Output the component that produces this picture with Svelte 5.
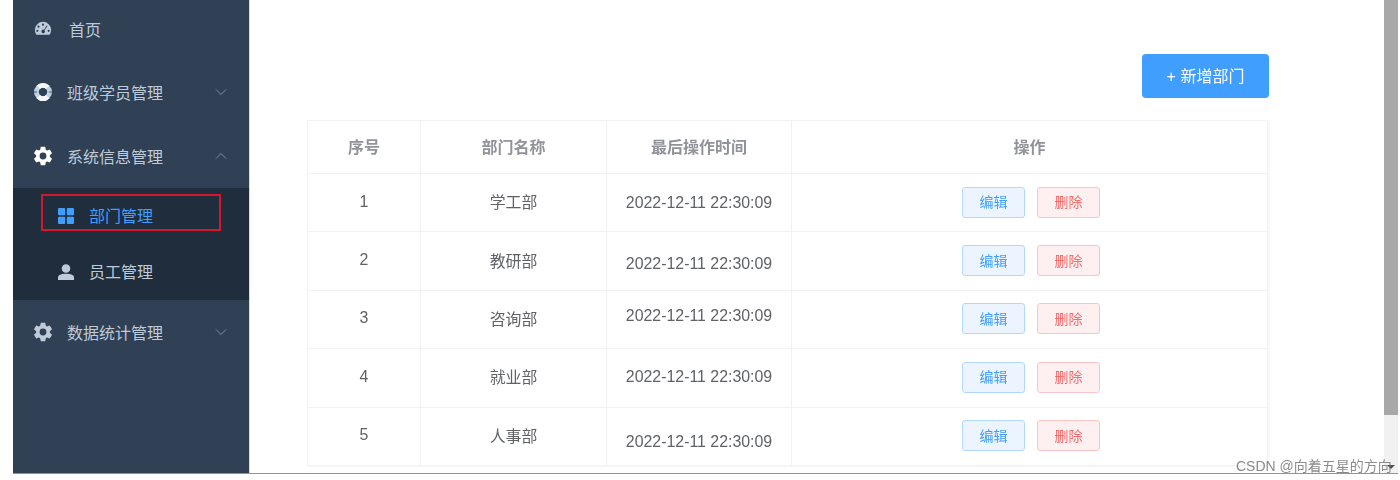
<script lang="ts">
  const depts = [
    { id: 1, name: '学工部', shift: 1 },
    { id: 2, name: '教研部', shift: 4 },
    { id: 3, name: '咨询部', shift: -2 },
    { id: 4, name: '就业部', shift: 0 },
    { id: 5, name: '人事部', shift: 7 }
  ];
  const time = '2022-12-11 22:30:09';

  // six toothed gear outline with a round hole, centred on 10,10
  function gearPath() {
    let d = '';
    for (let i = 0; i < 6; i++) {
      const a = (i * Math.PI) / 3 - Math.PI / 2;
      const pts = [
        [6.9, a - 0.42],
        [9.4, a - 0.24],
        [9.4, a + 0.24],
        [6.9, a + 0.42]
      ];
      for (const [r, t] of pts) {
        const x = (10 + r * Math.cos(t)).toFixed(2);
        const y = (10 + r * Math.sin(t)).toFixed(2);
        d += (d ? 'L' : 'M') + x + ' ' + y;
      }
    }
    return d + 'zM10 6.600a3.400 3.400 0 1 0 0 6.800 3.400 3.400 0 0 0 0-6.800z';
  }
  const gear = gearPath();
</script>

<div class="page">
  <aside class="sidebar">
    <div class="menu-item">
      <svg class="icon home-icon" viewBox="0 0 20 20">
        <path fill="#bfcbd9" fill-rule="evenodd" d="M10 2a9 9 0 0 0-9 9c0 2 .7 3.900 1.800 5.400h14.400A9 9 0 0 0 19 11a9 9 0 0 0-9-9zM10 4a1.200 1.200 0 1 1 0 2.400A1.200 1.200 0 0 1 10 4zM5 6.200a1.200 1.200 0 1 1 0 2.400 1.200 1.200 0 0 1 0-2.400zM3.700 10.800a1.200 1.200 0 1 1 0 2.400 1.200 1.200 0 0 1 0-2.400zM16.300 10.800a1.200 1.200 0 1 1 0 2.400 1.200 1.200 0 0 1 0-2.400zM14 6l1 .8-3.300 4.600a2 2 0 1 1-3.400.800 2 2 0 0 1 2.900-1.300z" />
      </svg>
      <span class="label">首页</span>
    </div>
    <div class="menu-item">
      <svg class="icon" viewBox="0 0 20 20">
        <circle cx="10" cy="10" r="6.600" fill="none" stroke="#c3d2e2" stroke-width="4.800" />
        <path fill="none" stroke="#f4f7fa" stroke-width="4.800" d="M5.300 5.300a6.600 6.600 0 0 1 9.400 0M14.700 14.700a6.600 6.600 0 0 1-9.400 0" />
        <path fill="none" stroke="#304156" stroke-width="0.800" d="M.5 10h3.600M15.900 10h3.600" />
      </svg>
      <span class="label">班级学员管理</span>
      <svg class="chevron" viewBox="0 0 12 8"><path d="M1 1.500l5 5 5-5" /></svg>
    </div>
    <div class="menu-item">
      <svg class="icon" viewBox="0 0 20 20"><path fill="#fff" fill-rule="evenodd" d={gear} /></svg>
      <span class="label">系统信息管理</span>
      <svg class="chevron" viewBox="0 0 12 8"><path d="M1 6.500l5-5 5 5" /></svg>
    </div>
    <div class="submenu">
      <div class="sub-item active">
        <span class="marker"></span>
        <svg class="sub-icon" viewBox="0 0 16 16">
          <rect x="0" y="0" width="7.200" height="7.200" rx="1" fill="#409eff" />
          <rect x="8.800" y="0" width="7.200" height="7.200" rx="1" fill="#409eff" />
          <rect x="0" y="8.800" width="7.200" height="7.200" rx="1" fill="#409eff" />
          <rect x="8.800" y="8.800" width="7.200" height="7.200" rx="1" fill="#409eff" />
        </svg>
        <span>部门管理</span>
      </div>
      <div class="sub-item">
        <svg class="sub-icon" viewBox="0 0 16 16">
          <circle cx="8" cy="4.500" r="4.300" fill="#bfcbd9" />
          <path fill="#bfcbd9" d="M0 16v-2.500C0 11 3 9.800 8 9.800s8 1.200 8 3.700V16z" />
        </svg>
        <span>员工管理</span>
      </div>
    </div>
    <div class="menu-item">
      <svg class="icon" viewBox="0 0 20 20"><path fill="#bfcbd9" fill-rule="evenodd" d={gear} /></svg>
      <span class="label">数据统计管理</span>
      <svg class="chevron" viewBox="0 0 12 8"><path d="M1 1.500l5 5 5-5" /></svg>
    </div>
  </aside>

  <main class="content">
    <div class="toolbar">
      <button class="add-btn">+ 新增部门</button>
    </div>
    <table class="dept-table">
      <colgroup>
        <col style="width: 113px" />
        <col style="width: 186px" />
        <col style="width: 185px" />
        <col />
      </colgroup>
      <thead>
        <tr>
          <th>序号</th>
          <th>部门名称</th>
          <th>最后操作时间</th>
          <th>操作</th>
        </tr>
      </thead>
      <tbody>
        {#each depts as d}
          <tr>
            <td>{d.id}</td>
            <td>{d.name}</td>
            <td><span class="time" style="transform: translateY({d.shift}px)">{time}</span></td>
            <td>
              <div class="actions">
                <button class="btn edit">编辑</button>
                <button class="btn del">删除</button>
              </div>
            </td>
          </tr>
        {/each}
      </tbody>
    </table>
  </main>

  <div class="scrollbar">
    <div class="thumb"></div>
    <div class="arrow"></div>
  </div>

  <span class="watermark">CSDN @向着五星的方向</span>
</div>

<style>
  :global(body) {
    background: #fff;
    font-family: 'Liberation Sans', 'Noto Sans CJK SC', sans-serif;
  }

  .page {
    position: relative;
    display: flex;
    height: 474px;
    width: 1385px;
    margin-left: 13px;
    box-sizing: border-box;
    border-bottom: 1px solid #8f9499;
    filter: blur(0.35px);
  }

  .sidebar {
    width: 237px;
    flex-shrink: 0;
    box-sizing: border-box;
    background: #304156;
    overflow: hidden;
    border-right: 1px solid #d8dce0;
    color: #bfcbd9;
    font-size: 16px;
  }

  .menu-item {
    display: flex;
    align-items: center;
    height: 63.67px;
    padding: 0 22px 0 20px;
  }

  .menu-item:first-child {
    margin-top: -3px;
  }

  .icon {
    width: 20px;
    height: 20px;
    margin-right: 14px;
    flex-shrink: 0;
  }

  .home-icon {
    width: 18px;
    height: 18px;
    margin-left: 1px;
    margin-right: 17px;
  }

  .label {
    flex: 1;
  }

  .chevron {
    width: 12px;
    height: 8px;
    fill: none;
    stroke: #7d8c9f;
    stroke-width: 1;
  }

  .submenu {
    background: #1f2d3d;
  }

  .sub-item {
    position: relative;
    display: flex;
    align-items: center;
    height: 56px;
    padding-left: 45px;
  }

  .sub-item span {
    padding-bottom: 1px;
  }

  .sub-item.active {
    color: #409eff;
  }

  .sub-icon {
    width: 16px;
    height: 16px;
    margin-right: 15px;
  }

  .marker {
    position: absolute;
    left: 28px;
    top: 6px;
    width: 180px;
    height: 37px;
    box-sizing: border-box;
    border: 2px solid #d3182d;
  }

  .content {
    flex: 1;
    min-width: 0;
    padding: 54px 115px 0 57px;
    box-sizing: border-box;
  }

  .toolbar {
    display: flex;
    justify-content: flex-end;
    margin-bottom: 22px;
  }

  .add-btn {
    width: 127px;
    height: 44px;
    border: none;
    border-radius: 4px;
    background: #409eff;
    color: #fff;
    font: inherit;
    font-size: 16px;
    padding: 0 0 2px;
  }

  .dept-table {
    width: 961px;
    table-layout: fixed;
    border-collapse: collapse;
    border: 1px solid #eef0f3;
    box-shadow: 1px 1px 2px rgba(0, 0, 0, 0.05);
    color: #606266;
    font-size: 15.9px;
  }

  th,
  td {
    border: 1px solid #f0f2f4;
    padding: 0 0 2px;
    text-align: center;
    font-weight: normal;
  }

  th {
    height: 50px;
    color: #909399;
    font-size: 16px;
    font-weight: 700;
  }

  td {
    height: 55.4px;
  }

  .time {
    display: inline-block;
  }

  .actions {
    display: flex;
    justify-content: center;
    gap: 12px;
    padding: 1px 0 0 3px;
  }

  .btn {
    width: 63px;
    height: 31px;
    border-radius: 3px;
    font: inherit;
    font-size: 14px;
    padding: 0 0 2px;
  }

  .edit {
    color: #409eff;
    background: #ecf5ff;
    border: 1px solid #b3d8ff;
  }

  .del {
    color: #f56c6c;
    background: #fef0f0;
    border: 1px solid #fbc4c4;
  }

  .scrollbar {
    width: 14px;
    flex-shrink: 0;
    background: #f1f1f1;
    position: relative;
  }

  .thumb {
    height: 415px;
    background: #a8a8a8;
  }

  .arrow {
    position: absolute;
    left: 3px;
    bottom: 4px;
    border-left: 4px solid transparent;
    border-right: 4px solid transparent;
    border-top: 4px solid #505050;
  }

  .watermark {
    position: absolute;
    left: 1223px;
    top: 457px;
    font-size: 14px;
    line-height: 18px;
    white-space: nowrap;
    color: rgba(110, 110, 110, 0.8);
  }
</style>
